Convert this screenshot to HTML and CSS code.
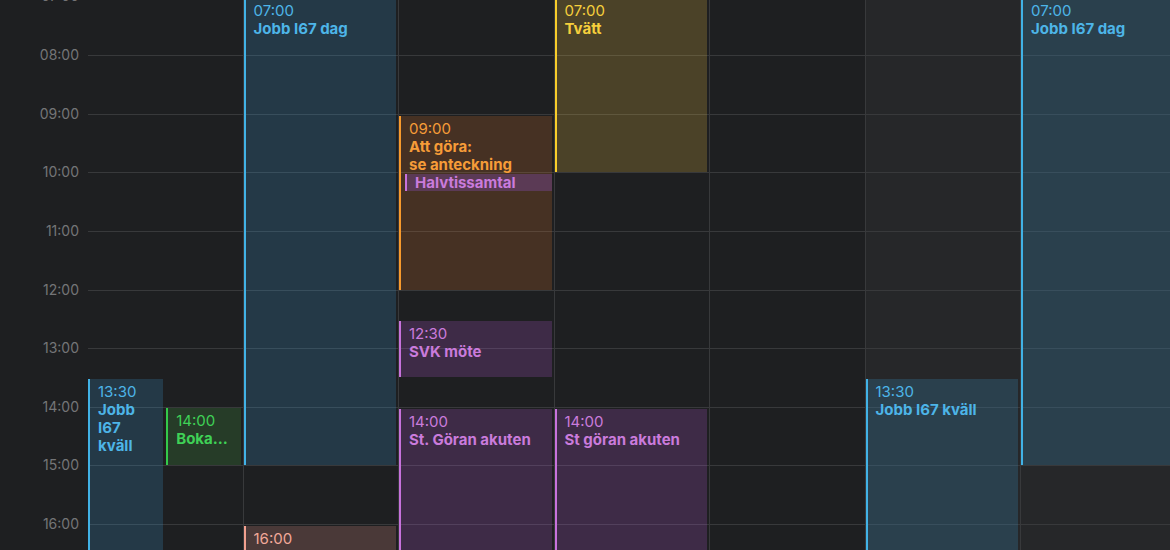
FILE: index.html
```html
<!DOCTYPE html>
<html lang="sv">
<head>
  <meta charset="UTF-8" />
  <title>Kalender - vecka</title>
  <link rel="stylesheet" href="styles.css">
</head>
<body>
  <div class="week">
    <!-- Tidskolumn -->
    <div class="gutter">
      <div class="hour"><span class="hour-label">07:00</span></div>
      <div class="hour"><span class="hour-label">08:00</span></div>
      <div class="hour"><span class="hour-label">09:00</span></div>
      <div class="hour"><span class="hour-label">10:00</span></div>
      <div class="hour"><span class="hour-label">11:00</span></div>
      <div class="hour"><span class="hour-label">12:00</span></div>
      <div class="hour"><span class="hour-label">13:00</span></div>
      <div class="hour"><span class="hour-label">14:00</span></div>
      <div class="hour"><span class="hour-label">15:00</span></div>
      <div class="hour"><span class="hour-label">16:00</span></div>
    </div>

    <!-- Måndag -->
    <div class="day">
      <div class="slot"></div><div class="slot"></div><div class="slot"></div><div class="slot"></div><div class="slot"></div>
      <div class="slot"></div><div class="slot"></div><div class="slot"></div><div class="slot"></div><div class="slot"></div>
      <div class="event blue half-a" style="top:383px; height:233px;">
        <div class="event-time">13:30</div>
        <div class="event-title">Jobb I67 kväll</div>
      </div>
      <div class="event green half-b" style="top:412px; height:57px;">
        <div class="event-time">14:00</div>
        <div class="event-title nowrap">Boka…</div>
      </div>
    </div>

    <!-- Tisdag -->
    <div class="day">
      <div class="slot"></div><div class="slot"></div><div class="slot"></div><div class="slot"></div><div class="slot"></div>
      <div class="slot"></div><div class="slot"></div><div class="slot"></div><div class="slot"></div><div class="slot"></div>
      <div class="event blue" style="top:2px; height:467px;">
        <div class="event-time">07:00</div>
        <div class="event-title">Jobb I67 dag</div>
      </div>
      <div class="event salmon" style="top:529.6px; height:57px;">
        <div class="event-time">16:00</div>
      </div>
    </div>

    <!-- Onsdag -->
    <div class="day">
      <div class="slot"></div><div class="slot"></div><div class="slot"></div><div class="slot"></div><div class="slot"></div>
      <div class="slot"></div><div class="slot"></div><div class="slot"></div><div class="slot"></div><div class="slot"></div>
      <div class="event orange" style="top:119.3px; height:173.9px;">
        <div class="event-time">09:00</div>
        <div class="event-title">Att göra:<br>se anteckning</div>
      </div>
      <div class="event purple compact inset" style="top:177.9px; height:17px;">
        <div class="event-title nowrap">Halvtissamtal</div>
      </div>
      <div class="event purple" style="top:324.4px; height:56.6px;">
        <div class="event-time">12:30</div>
        <div class="event-title">SVK möte</div>
      </div>
      <div class="event purple" style="top:412.4px; height:232.5px;">
        <div class="event-time">14:00</div>
        <div class="event-title">St. Göran akuten</div>
      </div>
    </div>

    <!-- Torsdag -->
    <div class="day">
      <div class="slot"></div><div class="slot"></div><div class="slot"></div><div class="slot"></div><div class="slot"></div>
      <div class="slot"></div><div class="slot"></div><div class="slot"></div><div class="slot"></div><div class="slot"></div>
      <div class="event yellow" style="top:2px; height:173.9px;">
        <div class="event-time">07:00</div>
        <div class="event-title">Tvätt</div>
      </div>
      <div class="event purple" style="top:412.4px; height:232.5px;">
        <div class="event-time">14:00</div>
        <div class="event-title">St göran akuten</div>
      </div>
    </div>

    <!-- Fredag -->
    <div class="day">
      <div class="slot"></div><div class="slot"></div><div class="slot"></div><div class="slot"></div><div class="slot"></div>
      <div class="slot"></div><div class="slot"></div><div class="slot"></div><div class="slot"></div><div class="slot"></div>
    </div>

    <!-- Lördag -->
    <div class="day weekend">
      <div class="slot"></div><div class="slot"></div><div class="slot"></div><div class="slot"></div><div class="slot"></div>
      <div class="slot"></div><div class="slot"></div><div class="slot"></div><div class="slot"></div><div class="slot"></div>
      <div class="event blue" style="top:383px; height:233px;">
        <div class="event-time">13:30</div>
        <div class="event-title">Jobb I67 kväll</div>
      </div>
    </div>

    <!-- Söndag -->
    <div class="day weekend">
      <div class="slot"></div><div class="slot"></div><div class="slot"></div><div class="slot"></div><div class="slot"></div>
      <div class="slot"></div><div class="slot"></div><div class="slot"></div><div class="slot"></div><div class="slot"></div>
      <div class="event blue" style="top:2px; height:467px;">
        <div class="event-time">07:00</div>
        <div class="event-title">Jobb I67 dag</div>
      </div>
    </div>
  </div>
</body>
</html>
```

FILE: styles.css
```css
/* ---------- BAS ---------- */
* {
  margin: 0;
  padding: 0;
  box-sizing: border-box;
}
body {
  font-family: "Inter", "Noto Sans", sans-serif;
  background: #1e1f21;
  color: #fff;
  overflow: hidden;
  height: 550px;
}

/* ---------- VECKA ---------- */
.week {
  display: flex;
  align-items: flex-start;
  width: 1176px;
  margin-top: -3.625px;
}

/* ---------- TIDSKOLUMN ---------- */
.gutter {
  flex: 0 0 87px;
}
.hour {
  height: 58.625px;
  display: flex;
  align-items: flex-start;
  justify-content: flex-end;
  padding-right: 8px;
}
.hour-label {
  font-size: 14px;
  line-height: 16px;
  color: #747577;
  transform: translateY(-50%);
}

/* ---------- DAGAR ---------- */
.day {
  flex: 0 0 155.5px;
  position: relative;
  border-left: 1px solid #38393b;
}
.day:nth-child(2) {
  border-left-color: transparent;
}
.day.weekend {
  background: #262729;
}
.slot {
  height: 58.625px;
  border-top: 1px solid #38393b;
}

/* ---------- HÄNDELSER ---------- */
.event {
  position: absolute;
  left: 0;
  right: 2px;
  border-left: 2px solid;
  padding: 4px 6px 0 8px;
  font-size: 15px;
  line-height: 18px;
  overflow: hidden;
}
.event-time {
  font-weight: 400;
}
.event-title {
  font-weight: 700;
}
.nowrap {
  white-space: nowrap;
  overflow: hidden;
  text-overflow: ellipsis;
}
.half-a {
  width: calc(50% - 2px);
}
.half-b {
  left: calc(50% + 1px);
}
.inset {
  left: 6px;
}
.compact {
  padding-top: 0;
  line-height: 17px;
}

.blue {
  background: rgba(60, 166, 223, 0.2);
  border-color: #41b2e6;
  color: #4db5e8;
}
.green {
  background: rgba(70, 181, 68, 0.2);
  border-color: #33c94a;
  color: #3fd156;
}
.orange {
  background: rgba(230, 126, 43, 0.2);
  border-color: #f89a2c;
  color: #f69c38;
}
.yellow {
  background: rgba(255, 211, 68, 0.2);
  border-color: #f8cd2a;
  color: #f6cf3c;
}
.purple {
  background: rgba(190, 96, 223, 0.2);
  border-color: #c772dc;
  color: #ca7bdc;
}
.purple.inset {
  background: #5b3a55;
}
.salmon {
  background: rgba(250, 166, 148, 0.2);
  border-color: #f2a08f;
  color: #f3a898;
}
```
